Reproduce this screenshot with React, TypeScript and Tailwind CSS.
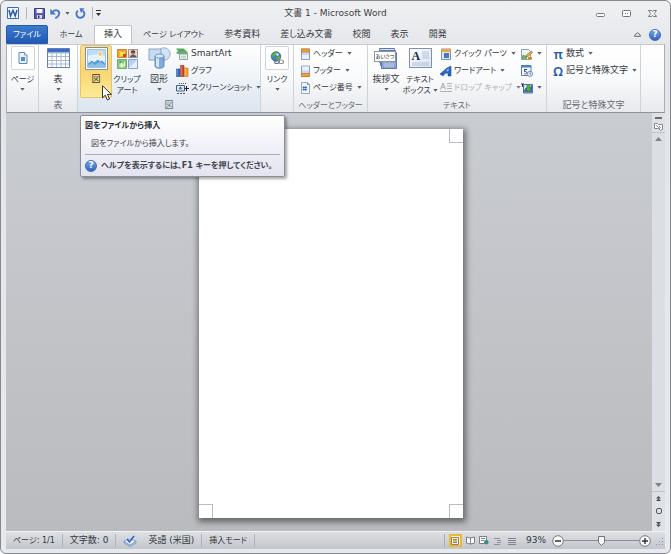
import type { ReactNode } from 'react';

const TABS = ['ページ レイアウト', '参考資料', '差し込み文書', '校閲', '表示', '開発'];

function Label({ children }: { children: string }) {
  const kana = /[ァ-ヶー]{3,}/.test(children);
  return <span className={kana ? 'text-[8px]' : 'text-[9px]'}>{children}</span>;
}

function Caret({ className = '' }: { className?: string }) {
  return (
    <svg className={`h-[3px] w-[5px] shrink-0 ${className}`} viewBox="0 0 5 3" fill="#5a606b">
      <path d="M.3 0h4.400L2.500 2.700z" />
    </svg>
  );
}

interface GroupProps {
  label?: string;
  className?: string;
  children: ReactNode;
}

function Group({ label, className = '', children }: GroupProps) {
  return (
    <section className={`flex shrink-0 flex-col border-r border-[#cfd3d9] ${className}`}>
      <div className="flex h-[54px] items-start">{children}</div>
      {label && (
        <h2 className="text-center leading-[13px] text-[#666a72]">
          <Label>{label}</Label>
        </h2>
      )}
    </section>
  );
}

interface BigButtonProps {
  icon: ReactNode;
  lines: string[];
  caret?: boolean;
  inlineCaret?: boolean;
  active?: boolean;
  framed?: boolean;
  className?: string;
}

function BigButton({ icon, lines, caret, inlineCaret, active, framed, className = '' }: BigButtonProps) {
  return (
    <button
      type="button"
      className={`flex h-[53px] shrink-0 flex-col items-center rounded-xs border ${
        active ? 'border-[#e8c367] bg-linear-to-b from-[#fae08e] via-[#f8d673] to-[#fdea98]' : 'border-transparent'
      } ${className}`}
    >
      <span
        className={`flex h-6 w-6 items-center justify-center ${
          framed ? 'rounded-xs border border-[#cfd3da] bg-white' : ''
        }`}
      >
        {icon}
      </span>
      <span className="mt-1 flex flex-col items-center leading-[11px] whitespace-nowrap">
        {lines.map((line, i) => (
          <span key={line} className="flex items-center">
            <Label>{line}</Label>
            {inlineCaret && i === lines.length - 1 && <Caret className="ml-[2px]" />}
          </span>
        ))}
      </span>
      {caret && <Caret className="mt-[3px]" />}
    </button>
  );
}

interface SmallButtonProps {
  icon: ReactNode;
  label?: string;
  title?: string;
  caret?: boolean;
  disabled?: boolean;
}

function SmallButton({ icon, label, title, caret, disabled }: SmallButtonProps) {
  return (
    <button
      type="button"
      disabled={disabled}
      aria-label={title}
      className={`flex h-[17px] items-center whitespace-nowrap ${disabled ? 'text-[#a0a3a8] opacity-80' : ''}`}
    >
      {icon}
      {label && <span className="ml-[2px] flex"><Label>{label}</Label></span>}
      {caret && <Caret className="ml-1" />}
    </button>
  );
}

/* ---------- icons ---------- */

function PageIcon() {
  return (
    <svg className="h-3 w-3" viewBox="0 0 12 12">
      <path d="M2 .5h5.500L10 3v8.500H2z" fill="#eaf3fc" stroke="#5b88b5" />
      <path d="M7.500.5V3H10" fill="#fff" stroke="#5b88b5" strokeWidth=".8" />
      <path d="M4 5h4v4H4z" fill="#4f8fcd" />
    </svg>
  );
}

function TableIcon() {
  return (
    <svg className="h-5 w-[23px]" viewBox="0 0 23 20">
      <path d="M.5.5h22v19H.5z" fill="#fff" stroke="#6481b3" />
      <path d="M1 1h21v3.500H1z" fill="#3a6cc6" />
      <path d="M1 5h21M1 8.500h21M1 12.500h21M1 16h21M5 5v14M9.500 5v14M14 5v14M18.500 5v14" stroke="#9db3d3" strokeWidth=".9" />
    </svg>
  );
}

function PictureIcon() {
  return (
    <svg className="h-[23px] w-[23px]" viewBox="0 0 23 23">
      <path d="M.5.5h22v22H.5z" fill="#fff" stroke="#7f8fa0" />
      <path d="M2.500 2.500h18v18h-18z" fill="#b9def6" stroke="#87aacb" strokeWidth=".7" />
      <path d="M3 9c5-2 11-2 17 0v5H3z" fill="#e3f3fc" />
      <circle cx="15" cy="7" r="2.200" fill="#fbc45a" stroke="#fff" strokeWidth=".6" />
      <path d="M3 16l4-3 2 2 4-3 2 2 2-1 3 3v4H3z" fill="#5b9fd6" />
      <path d="M3 18l4-2 3 2 5-3 5 3v2H3z" fill="#8ac1e8" />
      <path d="M3 16l4-3 2 2 4-3 2 2 2-1 3 3" fill="none" stroke="#fff" strokeWidth=".7" />
    </svg>
  );
}

function ClipArtIcon() {
  return (
    <svg className="h-[21px] w-[21px]" viewBox="0 0 21 21">
      <path d="M.5 1.500h9v8h-9z" fill="#f59a23" stroke="#c3782b" strokeWidth=".8" />
      <path d="M2 3l4 1 3-1-2 3 1 3-3-1-3 1 1-3z" fill="#ffe04a" />
      <path d="M6 6h3v3H6z" fill="#d64b23" />
      <path d="M11.500 1.500h9v8h-9z" fill="#e7d8cb" stroke="#8c7a78" strokeWidth=".8" />
      <path d="M13 9c0-3 6-3 6.500 0z" fill="#3d5f9e" />
      <circle cx="16" cy="5" r="2" fill="#c9793e" />
      <path d="M13.800 4.500c0-3 4.500-3 4.500 0z" fill="#50352c" />
      <path d="M.5 11.500h9v9h-9z" fill="#8ccb78" stroke="#5d9d65" strokeWidth=".8" />
      <path d="M2 18l2-4 2 2 2-3v5l-3 2z" fill="#dbf0bd" />
      <circle cx="3.500" cy="14" r="1.200" fill="#4f9fc4" />
      <path d="M11.500 11.500h9v9h-9z" fill="#bcd0f3" stroke="#7791c4" strokeWidth=".8" />
      <path d="M12 20l8-8v8z" fill="#e8effc" />
    </svg>
  );
}

function ShapesIcon() {
  return (
    <svg className="h-[22px] w-[23px]" viewBox="0 0 23 22">
      <circle cx="16" cy="7" r="6.200" fill="#d2e3f5" stroke="#7e9fc7" strokeWidth=".8" />
      <path d="M1 2h12v11H1z" fill="#c7dbf1" stroke="#7a9bc4" strokeWidth=".9" />
      <path d="M7 9v10c0 3 9 3 9 0V9z" fill="#7fabdf" stroke="#54799f" strokeWidth=".8" />
      <path d="M8 10v9c1 1 2 1.300 3 1.300V10z" fill="#d4e6f9" />
      <ellipse cx="11.500" cy="9" rx="4.500" ry="2" fill="#d9e9fa" stroke="#5f86b5" strokeWidth=".8" />
    </svg>
  );
}

function SmartArtIcon() {
  return (
    <svg className="h-3 w-[13px]" viewBox="0 0 13 12">
      <path d="M0 .5h7.500L11 3.500 8 6H2L0 5l2-2z" fill="#59a862" />
      <path d="M3.500 4.500h8v7h-8z" fill="#f7fbf7" stroke="#7e9c90" strokeWidth=".9" />
      <path d="M4 5h7v1.500H4z" fill="#6db370" />
      <path d="M5 8.200h5M5 9.800h5" stroke="#8fa8b8" strokeWidth=".7" />
    </svg>
  );
}

function ChartIcon() {
  return (
    <svg className="h-3 w-[13px]" viewBox="0 0 13 12">
      <path d="M.5 4h3.500v7.500H.5z" fill="#2f6cc4" stroke="#234f94" strokeWidth=".6" />
      <path d="M4.500.5h3.500v11H4.500z" fill="#d8452c" stroke="#9c2c1c" strokeWidth=".6" />
      <path d="M8.500 3h3.500v8.500H8.500z" fill="#f3a72c" stroke="#b97417" strokeWidth=".6" />
      <path d="M1.200 4.500v6M5.200 1.200v9.500M9.200 3.500v7" stroke="#fff" strokeOpacity=".5" strokeWidth=".7" />
    </svg>
  );
}

function ScreenshotIcon() {
  return (
    <svg className="h-3 w-[13px]" viewBox="0 0 13 12">
      <path d="M3 1.500h7" stroke="#555" strokeDasharray="1 1" />
      <path d="M.5 3.500h8v5.500h-8z" fill="#dbe7f5" stroke="#4c5e78" />
      <circle cx="4.500" cy="6.200" r="1.700" fill="#4273b5" stroke="#fff" strokeWidth=".5" />
      <path d="M10.500 4v5M8.500 6.500h4.500" stroke="#222" strokeWidth="1.100" />
      <path d="M1 11.500h8" stroke="#4c5e78" strokeDasharray="2 1" />
    </svg>
  );
}

function LinkIcon() {
  return (
    <svg className="h-[14px] w-[14px]" viewBox="0 0 14 14">
      <circle cx="6" cy="5.500" r="4.800" fill="#3f82c0" stroke="#3a6b6c" strokeWidth=".8" />
      <path d="M3 2c2-1 5-1 4 1L5 5 2 6zM6 6l4-1v3L7 9.800z" fill="#62ae46" />
      <path d="M6 3l2-1 1 2-2 1z" fill="#d8eef7" />
      <rect x="4.500" y="9" width="5" height="3.500" rx="1.700" fill="none" stroke="#687486" strokeWidth="1.100" />
      <rect x="8.500" y="9" width="5" height="3.500" rx="1.700" fill="none" stroke="#8a95a6" strokeWidth="1.100" />
    </svg>
  );
}

function HeaderIcon({ footer = false }: { footer?: boolean }) {
  return (
    <svg className="h-3 w-[11px]" viewBox="0 0 11 12">
      <path d="M1.500 1h8v10.500h-8z" fill="#c6d7ef" stroke="#8094b4" strokeWidth=".9" />
      <path d={footer ? 'M1.500 8.500h8v3h-8z' : 'M1.500 1h8v3h-8z'} fill="#f3a23a" stroke="#c17a2a" strokeWidth=".8" />
      <path d={footer ? 'M2 1.500h7v4H2z' : 'M2 7h7v4H2z'} fill="#e9f1fb" />
    </svg>
  );
}

function PageNumberIcon() {
  return (
    <svg className="h-3 w-[11px]" viewBox="0 0 11 12">
      <path d="M1.500.5h6l2 2v9h-8z" fill="#f1f6fd" stroke="#8ba0c0" strokeWidth=".9" />
      <path d="M7.500.5v2h2" fill="none" stroke="#5d7ca9" strokeWidth=".8" />
      <path d="M3.800 4v5M5.800 4v5M2.500 5.500h4.500M2.500 7.500h4.500" stroke="#2e62b3" strokeWidth=".8" />
    </svg>
  );
}

function GreetingIcon() {
  return (
    <span className="relative flex h-[23px] w-6 items-center">
      <svg className="absolute inset-0 h-[23px] w-6" viewBox="0 0 24 23">
        <path d="M5.500 1.500h15v14h-15z" fill="#d9e3f3" stroke="#5f78ab" />
        <path d="M6.500 3.500h15v15h-15z" fill="#b9c9e6" stroke="#5f78ab" />
        <path d="M7.500 5.500h15v16h-15z" fill="#8fa8d3" stroke="#5f78ab" />
        <path d="M10 17h10M10 19h10" stroke="#c9d6ee" strokeWidth=".8" />
      </svg>
      <span className="relative mb-1 w-[22px] border border-[#8c95a4] bg-white text-center text-[5px] leading-[9px] whitespace-nowrap text-[#222]">
        あいさつ
      </span>
    </span>
  );
}

function TextBoxIcon() {
  return (
    <span className="relative flex h-5 w-[23px] border border-[#8391a8] bg-linear-to-br from-white to-[#d6e2f2]">
      <svg className="absolute inset-0 h-[18px] w-[21px]" viewBox="0 0 21 18">
        <path d="M12 3h7M12 5h7M12 7h7M12 9h7M2 14h17M2 16h17" stroke="#9dafca" strokeWidth=".7" />
      </svg>
      <span className="relative ml-[2px] font-['Liberation_Serif',serif] text-[12px] leading-[14px] font-bold text-[#1d2c44]">A</span>
    </span>
  );
}

function QuickPartsIcon() {
  return (
    <svg className="h-3 w-3" viewBox="0 0 12 12">
      <path d="M1.500 1h9v10.500h-9z" fill="#dce8f6" stroke="#7189ad" strokeWidth=".9" />
      <path d="M1.500 1h9v3h-9z" fill="#f3a63a" />
      <path d="M4 5h5v5H4z" fill="#4577c4" />
    </svg>
  );
}

function WordArtIcon() {
  return (
    <svg className="h-3 w-3" viewBox="0 0 12 12">
      <path d="M0 9l7-6 4-2v10H8V8L5 8.500 3 11z" fill="#2867c9" stroke="#153f87" strokeWidth=".5" />
      <path d="M8.500 3v3L6 6.500z" fill="#a7cdf8" />
    </svg>
  );
}

function DropCapIcon() {
  return (
    <svg className="h-3 w-3" viewBox="0 0 12 12" fill="none" stroke="#94979c">
      <path d="M.5 7.500L3 1l2.500 6.500M1.500 5.200h3" />
      <path d="M7 1.500h5M7 4h5M7 6.500h5M0 9.500h12" strokeWidth=".9" />
    </svg>
  );
}

function SignatureIcon() {
  return (
    <svg className="h-3 w-3" viewBox="0 0 12 12">
      <path d="M.5 1.500h7l2 2v8h-9z" fill="#eef4fc" stroke="#7f95b9" strokeWidth=".9" />
      <path d="M1 11V8c2-3 3 1 5-1v4z" fill="#6fb05c" />
      <path d="M5 9l1-2.500L10.500 3l1 1.500L7 8.500z" fill="#f0b232" stroke="#86642a" strokeWidth=".6" />
      <path d="M7 9h4v2.500H7z" fill="#d18a3a" />
    </svg>
  );
}

function DateIcon() {
  return (
    <svg className="h-3 w-3" viewBox="0 0 12 12">
      <path d="M.5.5h9.500v10H.5z" fill="#f5f9ff" stroke="#4c6ea4" strokeWidth=".9" />
      <path d="M.5.5H10V2.500H.5z" fill="#4f80cb" />
      <path d="M6 4.500H3.500v2c3-.5 3 2.500 0 2.500" fill="none" stroke="#1f3f77" />
      <circle cx="9" cy="8.800" r="2.600" fill="#e7f0fb" stroke="#5a7eb1" strokeWidth=".8" />
      <path d="M9 7.500V9h1.200" fill="none" stroke="#2b4b80" strokeWidth=".7" />
    </svg>
  );
}

function ObjectIcon() {
  return (
    <svg className="h-3 w-3" viewBox="0 0 12 12">
      <path d="M0 2h3M1.500 2v3" stroke="#333" />
      <path d="M2.500 2.500h9v8.500h-9z" fill="#cfe1f7" stroke="#476494" strokeWidth=".9" />
      <path d="M3 8l3-3 2 2 3-5v8.500H3z" fill="#3f6fb8" />
      <path d="M6 3.500h3v3h1.500L7.500 10l-3-3.500H6z" fill="#58b03e" stroke="#2e6f24" strokeWidth=".5" />
    </svg>
  );
}

function WordIcon() {
  return (
    <svg className="h-3 w-3" viewBox="0 0 12 12">
      <path d="M.5.5h11v11H.5z" fill="#f4f8fe" stroke="#3d6cb0" />
      <path d="M2 3l1.500 6L6 3.500 8.200 9 10 3" fill="none" stroke="#2459a9" strokeWidth="1.500" />
    </svg>
  );
}

function SaveIcon() {
  return (
    <svg className="h-[11px] w-[11px]" viewBox="0 0 11 11">
      <path d="M.5.5h10v10H.5z" fill="#5b5bb5" stroke="#3d3c8c" />
      <path d="M2.500 1h6v4h-6z" fill="#f2f5fb" />
      <path d="M3 7h5v3.500H3z" fill="#d7dcee" />
      <path d="M4 7.500h1.500V10H4z" fill="#35357c" />
    </svg>
  );
}

function UndoIcon() {
  return (
    <svg className="h-[11px] w-[11px]" viewBox="0 0 11 11">
      <path d="M2.500 4C5 1 9.500 2 9.200 5.500 9 8 7 9.300 5.300 10.300" fill="none" stroke="#4a76cc" strokeWidth="1.900" />
      <path d="M.3.8v5.700H6z" fill="#4a76cc" />
    </svg>
  );
}

function RedoIcon() {
  return (
    <svg className="h-[11px] w-[11px]" viewBox="0 0 11 11">
      <path d="M2.800 2.800C.3 5.200 1.500 9.800 5.300 9.800c4 0 5.300-4.800 2.600-7" fill="none" stroke="#4a76cc" strokeWidth="1.900" />
      <path d="M4.500.3h4.800L6 5.300z" fill="#4a76cc" />
    </svg>
  );
}

function HelpIcon() {
  return (
    <span className="flex h-3 w-3 shrink-0 items-center justify-center rounded-full border border-[#3a6cba] bg-linear-to-b from-[#7aa9e8] to-[#2d63bd] text-[9px] leading-none font-bold text-white">
      ?
    </span>
  );
}

function Cursor() {
  return (
    <svg className="h-4 w-[11px]" viewBox="0 0 11 16">
      <path d="M.5.8v12l2.800-2.600 2 4.800 2.200-1-2-4.600h4z" fill="#fff" stroke="#222" strokeWidth=".9" />
    </svg>
  );
}

function ProofIcon() {
  return (
    <svg className="h-3 w-[14px]" viewBox="0 0 14 12">
      <path d="M1 6l5-2 7 2-6 5z" fill="#f0f5fc" stroke="#8ba4cf" strokeWidth=".9" />
      <path d="M1 6v2l6 3.500L13 8V6l-6 4z" fill="#b9cbe8" stroke="#6c8ac0" strokeWidth=".7" />
      <path d="M4 4l2.500 3L11 1" fill="none" stroke="#2f62c4" strokeWidth="1.600" />
    </svg>
  );
}

/* ---------- window parts ---------- */

function TitleBar() {
  return (
    <header className="relative flex h-6 items-end justify-between pb-1 pr-2">
      <div className="flex h-4 items-center pl-px">
        <WordIcon />
        <span className="mx-[7px] h-3 w-px bg-[#b3b7bd]" />
        <button type="button" aria-label="上書き保存"><SaveIcon /></button>
        <button type="button" aria-label="元に戻す" className="ml-[5px] flex items-center gap-1">
          <UndoIcon />
          <Caret />
        </button>
        <button type="button" aria-label="繰り返し" className="ml-[5px]"><RedoIcon /></button>
        <span className="mr-[3px] ml-[6px] h-3 w-px bg-[#b3b7bd]" />
        <button type="button" aria-label="クイック アクセス ツール バーのカスタマイズ">
          <svg className="h-[6px] w-[5px]" viewBox="0 0 5 6"><path d="M0 0h5v1H0zM0 3h5L2.500 6z" fill="#333" /></svg>
        </button>
      </div>
      <h1 className="absolute inset-x-0 top-1 text-center leading-4 text-[#3c3f45]">文書 1 - Microsoft Word</h1>
      <div className="flex h-4 items-center gap-[17px]">
        <button type="button" aria-label="最小化">
          <svg className="h-[9px] w-[9px]" viewBox="0 0 9 9"><rect x=".5" y="4.500" width="8" height="3" rx="1" fill="#fff" stroke="#70747c" /></svg>
        </button>
        <button type="button" aria-label="元に戻す (縮小)">
          <svg className="h-[9px] w-[9px]" viewBox="0 0 9 9"><rect x=".5" y="1.500" width="8" height="6" rx="1" fill="#fff" stroke="#70747c" /><path d="M3 4.500h1M5 4.500h1" stroke="#70747c" /></svg>
        </button>
        <button type="button" aria-label="閉じる">
          <svg className="h-[9px] w-[9px]" viewBox="0 0 9 9"><path d="M.5 1.500h3l1 1.300 1-1.300h3L6.200 4.500l2.300 3h-3l-1-1.300-1 1.300h-3l2.300-3z" fill="#fff" stroke="#656972" strokeWidth=".9" /></svg>
        </button>
      </div>
    </header>
  );
}

function TabBar() {
  return (
    <nav className="flex h-[19px] items-stretch whitespace-nowrap text-[#363a41]">
      <button type="button" className="w-[42px] rounded-t-xs border border-[#2458a8] bg-linear-to-b from-[#3c7ace] to-[#2159b4] text-white">
        <Label>ファイル</Label>
      </button>
      <button type="button" className="w-[46px]"><Label>ホーム</Label></button>
      <button type="button" className="w-[38px] rounded-t-xs border border-b-0 border-[#bfc3ca] bg-white"><Label>挿入</Label></button>
      <div className="ml-[11px] flex gap-5">
        {TABS.map((tab) => (
          <button key={tab} type="button"><Label>{tab}</Label></button>
        ))}
      </div>
      <div className="ml-auto flex items-center gap-2 pr-1">
        <button type="button" aria-label="リボンの最小化">
          <svg className="h-[5px] w-[7px]" viewBox="0 0 7 5" fill="none" stroke="#60656e"><path d="M.7 3L3.500.7 6.300 3v1.300H.7z" /></svg>
        </button>
        <button type="button" aria-label="ヘルプ"><HelpIcon /></button>
      </div>
    </nav>
  );
}

function Ribbon() {
  const symbol = "w-3 text-center font-['Noto_Sans','DejaVu_Sans',sans-serif] text-[13px] leading-3 font-semibold text-[#2459b5]";
  return (
    <div className="flex h-[69px] border border-[#a9adb4] border-t-[#c6cad0] border-b-[#8f949c] bg-linear-to-b from-white via-[#f9fafb] to-[#e6e9ed] text-[#33373e]">
      <Group className="w-8">
        <BigButton icon={<PageIcon />} lines={['ページ']} caret framed className="w-full" />
      </Group>
      <Group label="表" className="w-[39px]">
        <BigButton icon={<TableIcon />} lines={['表']} caret className="w-full" />
      </Group>
      <Group label="図" className="w-[183px] bg-linear-to-b from-transparent to-[#d6e4f0]/60">
        <BigButton icon={<PictureIcon />} lines={['図']} active className="ml-[2px] w-8" />
        <BigButton icon={<ClipArtIcon />} lines={['クリップ', 'アート']} className="w-[30px]" />
        <BigButton icon={<ShapesIcon />} lines={['図形']} caret className="w-[34px]" />
        <div>
          <SmallButton icon={<SmartArtIcon />} label="SmartArt" />
          <SmallButton icon={<ChartIcon />} label="グラフ" />
          <SmallButton icon={<ScreenshotIcon />} label="スクリーンショット" caret />
        </div>
      </Group>
      <Group className="w-[33px]">
        <BigButton icon={<LinkIcon />} lines={['リンク']} caret framed className="w-full" />
      </Group>
      <Group label="ヘッダーとフッター" className="w-[74px]">
        <div className="pl-[6px]">
          <SmallButton icon={<HeaderIcon />} label="ヘッダー" caret />
          <SmallButton icon={<HeaderIcon footer />} label="フッター" caret />
          <SmallButton icon={<PageNumberIcon />} label="ページ番号" caret />
        </div>
      </Group>
      <Group label="テキスト" className="w-[179px]">
        <BigButton icon={<GreetingIcon />} lines={['挨拶文']} caret className="ml-[2px] w-8" />
        <BigButton icon={<TextBoxIcon />} lines={['テキスト', 'ボックス']} inlineCaret className="w-9" />
        <div className="w-[79px] pl-[2px]">
          <SmallButton icon={<QuickPartsIcon />} label="クイック パーツ" caret />
          <SmallButton icon={<WordArtIcon />} label="ワードアート" caret />
          <SmallButton icon={<DropCapIcon />} label="ドロップ キャップ" caret disabled />
        </div>
        <div className="pl-[4px]">
          <SmallButton icon={<SignatureIcon />} title="署名欄" caret />
          <SmallButton icon={<DateIcon />} title="日付と時刻" />
          <SmallButton icon={<ObjectIcon />} title="オブジェクト" caret />
        </div>
      </Group>
      <Group label="記号と特殊文字" className="w-[94px]">
        <div className="pl-[5px]">
          <SmallButton icon={<span className={symbol}>π</span>} label="数式" caret />
          <SmallButton icon={<span className={symbol}>Ω</span>} label="記号と特殊文字" caret />
        </div>
      </Group>
    </div>
  );
}

function Tooltip() {
  return (
    <div
      role="tooltip"
      className="absolute top-[2px] left-[74px] z-10 w-[205px] rounded-xs border border-[#8b8e98] bg-linear-to-b from-white to-[#e3e4f0] px-1 text-[8px] text-[#43454c] shadow-[2px_2px_3px_rgba(0,0,0,0.35)]"
    >
      <p className="pt-[3px] leading-[14px] font-bold text-[#2f3137]">図をファイルから挿入</p>
      <p className="pt-1 pb-[3px] pl-[6px] leading-[14px]">図をファイルから挿入します。</p>
      <p className="flex items-center gap-1 border-t border-[#a9abb8] py-1 leading-[13px] font-bold whitespace-nowrap">
        <HelpIcon />
        ヘルプを表示するには、F1 キーを押してください。
      </p>
    </div>
  );
}

function Paper() {
  const mark = 'h-[14px] w-[14px] border-[#b9bcc2]';
  return (
    <div className="flex w-[264px] shrink-0 flex-col justify-between bg-white shadow-[1px_2px_6px_2px_rgba(0,0,0,0.45)]">
      <div className="flex justify-between">
        <span className={`${mark} border-r border-b`} />
        <span className={`${mark} border-b border-l`} />
      </div>
      <div className="flex justify-between">
        <span className={`${mark} border-t border-r`} />
        <span className={`${mark} border-t border-l`} />
      </div>
    </div>
  );
}

function ScrollBar() {
  return (
    <div className="flex w-[13px] shrink-0 flex-col items-center bg-[#dfe1e5]">
      <span className="mt-1 h-[2px] w-[7px] bg-[#666a72]" />
      <button type="button" aria-label="ルーラー" className="mt-[3px]">
        <svg className="h-[9px] w-[9px]" viewBox="0 0 9 9" fill="#f8f9fb" stroke="#6d727b" strokeWidth=".8">
          <path d="M.5 1.500h3l1 1h4v5l-2 1-2-2H.5z" /><path d="M2 3l4 4M5 4l2 2" />
        </svg>
      </button>
      <div className="mt-px flex w-full flex-1 flex-col items-center justify-between border-y border-[#c0c4ca] bg-[#dbdfe5] py-1">
        <svg className="h-1 w-[7px]" viewBox="0 0 7 4"><path d="M0 4h7L3.500 0z" fill="#7c828c" /></svg>
        <svg className="h-1 w-[7px]" viewBox="0 0 7 4"><path d="M0 0h7L3.500 4z" fill="#7c828c" /></svg>
      </div>
      <div className="flex h-[39px] flex-col items-center justify-around">
        <svg className="h-[5px] w-[5px]" viewBox="0 0 5 5"><path d="M0 2.500h5L2.500 0zM0 5h5L2.500 2.500z" fill="#444a55" /></svg>
        <span className="h-[6px] w-[6px] rounded-xs border border-[#555b66]" />
        <svg className="h-[5px] w-[5px]" viewBox="0 0 5 5"><path d="M0 0h5L2.500 2.500zM0 2.500h5L2.500 5z" fill="#444a55" /></svg>
      </div>
    </div>
  );
}

function StatusBar() {
  const cell = 'flex h-[13px] items-center border-r border-[#b0b4ba] px-[7px]';
  return (
    <footer className="flex h-[18px] items-center border-t border-[#f2f3f5] bg-linear-to-b from-[#dddfe3] to-[#c3c7cc] whitespace-nowrap text-[#33373e]">
      <span className={cell}><Label>ページ: 1/1</Label></span>
      <span className={cell}><Label>文字数: 0</Label></span>
      <span className={`${cell} gap-[11px]`}>
        <ProofIcon />
        <Label>英語 (米国)</Label>
      </span>
      <span className={cell}><Label>挿入モード</Label></span>
      <div className="ml-auto flex h-[13px] items-center border-l border-[#a9adb4] pl-1">
        <button type="button" aria-label="印刷レイアウト" className="flex h-[13px] w-[13px] items-center justify-center border-2 border-[#ecb936] bg-[#fff3bf]">
          <svg className="h-[8px] w-[8px]" viewBox="0 0 8 8"><path d="M.5.5h7v7h-7zM2 2.500h4M2 4h4M2 5.500h4" fill="none" stroke="#69655a" strokeWidth=".8" /></svg>
        </button>
        <button type="button" aria-label="全画面閲覧" className="ml-1">
          <svg className="h-[9px] w-[9px]" viewBox="0 0 9 9"><path d="M.5 1l3.500 1L8.500 1v6L4.500 8 .5 7zM4.500 2v6" fill="#fff" stroke="#5d6470" strokeWidth=".8" /></svg>
        </button>
        <button type="button" aria-label="Web レイアウト" className="ml-1">
          <svg className="h-[9px] w-[10px]" viewBox="0 0 10 9"><path d="M.5.5h7v7h-7zM2 2.500h4M2 4.500h3" fill="#fff" stroke="#5d6470" strokeWidth=".8" /><circle cx="7.300" cy="6.300" r="2.300" fill="#3b8a86" /></svg>
        </button>
        <button type="button" aria-label="アウトライン" className="ml-[5px]">
          <svg className="h-[8px] w-[8px]" viewBox="0 0 8 8"><path d="M0 1.500h6M3 3.500h4M3 5.500h4M0 7.500h6" stroke="#8d929a" /></svg>
        </button>
        <button type="button" aria-label="下書き" className="ml-[6px]">
          <svg className="h-[8px] w-[8px]" viewBox="0 0 8 8"><path d="M0 1.500h8M0 3.500h8M0 5.500h8M0 7.500h8" stroke="#80858e" /></svg>
        </button>
        <span className="ml-[10px]">93%</span>
        <button type="button" aria-label="縮小" className="ml-[6px]">
          <svg className="h-3 w-3" viewBox="0 0 12 12"><circle cx="6" cy="6" r="5.300" fill="#f7f8fa" stroke="#757a83" /><path d="M3 6h6" stroke="#333" strokeWidth="1.400" /></svg>
        </button>
        <label className="relative flex w-[75px] items-center">
          <input type="range" min={10} max={190} defaultValue={100} aria-label="ズーム" className="absolute inset-0 w-full opacity-0" />
          <span className="h-px flex-1 bg-[#8a8e96]" />
          <svg className="h-[10px] w-[7px]" viewBox="0 0 7 10"><path d="M.5.5h6v6l-3 3-3-3z" fill="#f6f7f9" stroke="#6e737c" /></svg>
          <span className="h-px flex-1 bg-[#8a8e96]" />
        </label>
        <button type="button" aria-label="拡大">
          <svg className="h-3 w-3" viewBox="0 0 12 12"><circle cx="6" cy="6" r="5.300" fill="#f7f8fa" stroke="#757a83" /><path d="M3 6h6M6 3v6" stroke="#333" strokeWidth="1.400" /></svg>
        </button>
        <svg className="ml-1 h-[10px] w-[10px] self-end" viewBox="0 0 10 10" fill="#8d929b"><path d="M7 1h1v1H7zM4 4h1v1H4zM7 4h1v1H7zM1 7h1v1H1zM4 7h1v1H4zM7 7h1v1H7z" /></svg>
      </div>
    </footer>
  );
}

export default function App() {
  return (
    <div
      lang="ja"
      className="relative flex min-h-screen flex-col overflow-hidden rounded-md border border-[#85888e] bg-linear-to-b from-[#eff0f2] via-[#e3e5e9] via-10% to-[#e6e9ee] px-[5px] pb-1 font-['DejaVu_Sans','Noto_Sans_CJK_JP',sans-serif] text-[9px] [font-feature-settings:'palt']"
    >
      <TitleBar />
      <TabBar />
      <Ribbon />
      <div className="relative flex flex-1">
        <Tooltip />
        <main className="flex flex-1 justify-center bg-linear-to-b from-[#c9ccd1] to-[#babbbf] pt-4 pb-[13px] pl-[3px]">
          <Paper />
        </main>
        <ScrollBar />
      </div>
      <StatusBar />
      <span className="pointer-events-none absolute top-[84px] left-[101px] flex">
        <Cursor />
      </span>
    </div>
  );
}
